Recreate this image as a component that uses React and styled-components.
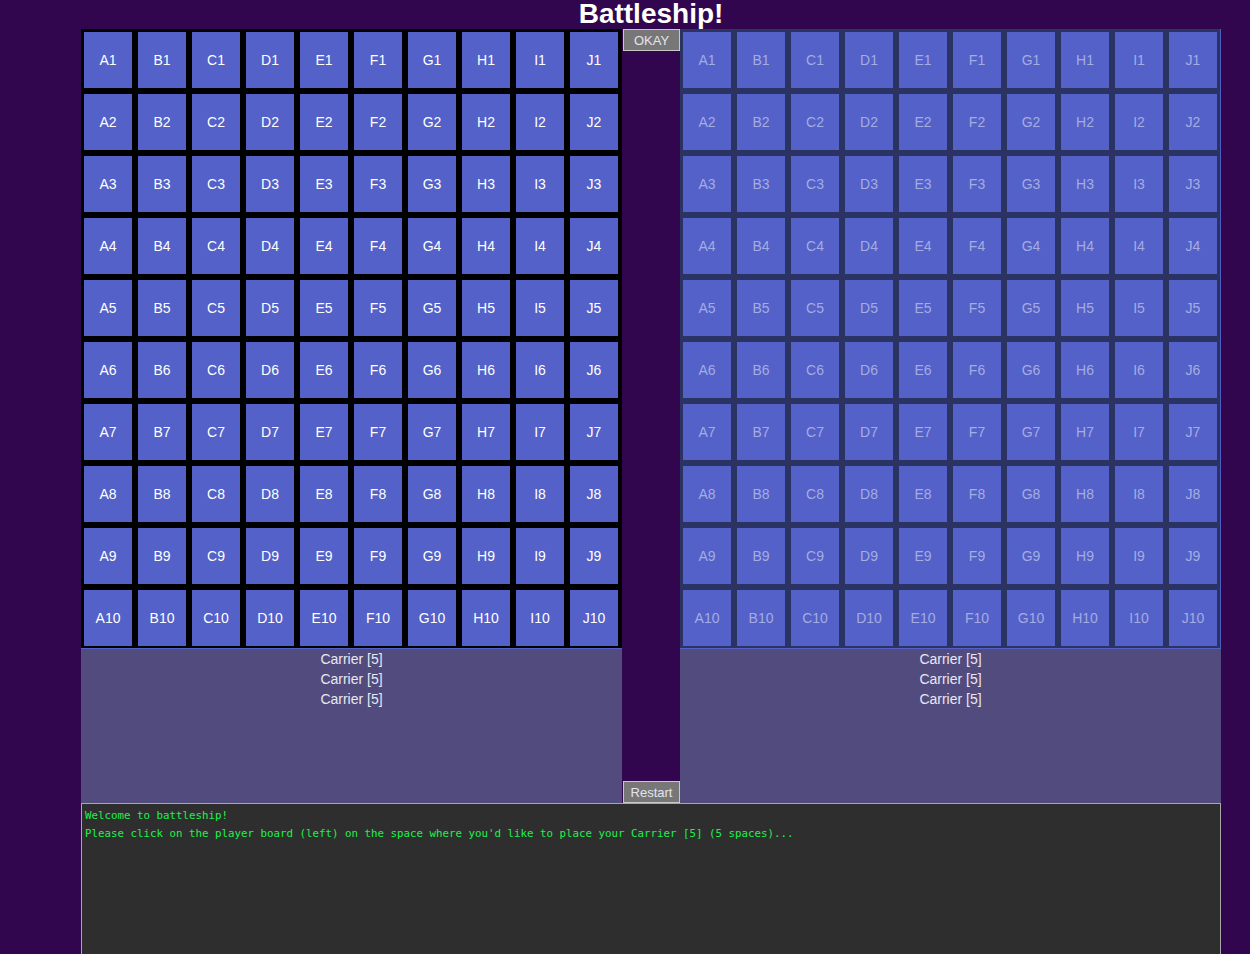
import React from "react"
import styled, { createGlobalStyle } from "styled-components"

const GlobalStyle = createGlobalStyle`
  html, body {
    margin: 0;
    padding: 0;
    background-color: #32064e;
    font-family: "Liberation Sans", Arial, sans-serif;
  }
`

const COLS = ["A", "B", "C", "D", "E", "F", "G", "H", "I", "J"]
const ROWS = [1, 2, 3, 4, 5, 6, 7, 8, 9, 10]

const Page = styled.div`
  width: 1140px;
  margin-left: 81px;
`

const Title = styled.h1`
  margin: 0;
  height: 29px;
  line-height: 27px;
  font-size: 28px;
  font-weight: bold;
  color: #ffffff;
  text-align: center;
`

const Main = styled.div`
  display: grid;
  grid-template-columns: 541px 58px 541px;
`

const Side = styled.div`
  display: flex;
  flex-direction: column;
`

const Board = styled.div`
  box-sizing: border-box;
  height: 619px;
  display: grid;
  grid-template-columns: repeat(10, 48px);
  grid-template-rows: repeat(10, 1fr);
  gap: 6px;
  padding: 3px 3px 2px;
  background-color: ${(p) => (p.$enemy ? "#2b3362" : "#000000")};
  border-right: 1px solid ${(p) => (p.$enemy ? "#4f5dc2" : "#000000")};
`

const Cell = styled.div`
  display: flex;
  align-items: center;
  justify-content: center;
  background-color: #5361c8;
  color: ${(p) => (p.$enemy ? "#a5ace2" : "#ffffff")};
  font-size: 14px;
  cursor: pointer;
`

const ShipList = styled.div`
  height: 154px;
  border-top: 1px solid #5361c8;
  background-color: #524b7e;
  color: #e8e8f2;
  font-size: 14px;
  line-height: 20px;
  text-align: center;
`

const Middle = styled.div`
  display: flex;
  flex-direction: column;
  justify-content: space-between;
  align-items: center;
`

const Button = styled.button`
  width: 57px;
  height: 22px;
  padding: 0;
  margin-left: 1px;
  background-color: #777777;
  border: 1px solid #c8c8c8;
  color: #e4e4ee;
  font-family: "Liberation Sans", Arial, sans-serif;
  font-size: 13px;
  cursor: pointer;
`

const Log = styled.div`
  height: 150px;
  padding: 3px 3px 0;
  background-color: #2e2e2e;
  border-top: 1px solid #a8a8a8;
  border-left: 1px solid #a8a8a8;
  border-right: 1px solid #a8a8a8;
  color: #1cf24c;
  font-family: "DejaVu Sans Mono", "Liberation Mono", monospace;
  font-size: 10.8px;
  line-height: 18px;
`

const GameBoard = ({ enemy }) => (
  <Board $enemy={enemy}>
    {ROWS.map((r) =>
      COLS.map((c) => (
        <Cell key={c + r} $enemy={enemy}>
          {c}
          {r}
        </Cell>
      ))
    )}
  </Board>
)

const ships = ["Carrier [5]", "Carrier [5]", "Carrier [5]"]

const App = () => {
  return (
    <>
      <GlobalStyle />
      <Page>
        <Title>Battleship!</Title>
        <Main>
          <Side>
            <GameBoard />
            <ShipList>
              {ships.map((s, i) => (
                <div key={i}>{s}</div>
              ))}
            </ShipList>
          </Side>
          <Middle>
            <Button>OKAY</Button>
            <Button>Restart</Button>
          </Middle>
          <Side>
            <GameBoard enemy />
            <ShipList>
              {ships.map((s, i) => (
                <div key={i}>{s}</div>
              ))}
            </ShipList>
          </Side>
        </Main>
        <Log>
          <div>Welcome to battleship!</div>
          <div>
            Please click on the player board (left) on the space where you'd
            like to place your Carrier [5] (5 spaces)...
          </div>
        </Log>
      </Page>
    </>
  )
}

export default App
